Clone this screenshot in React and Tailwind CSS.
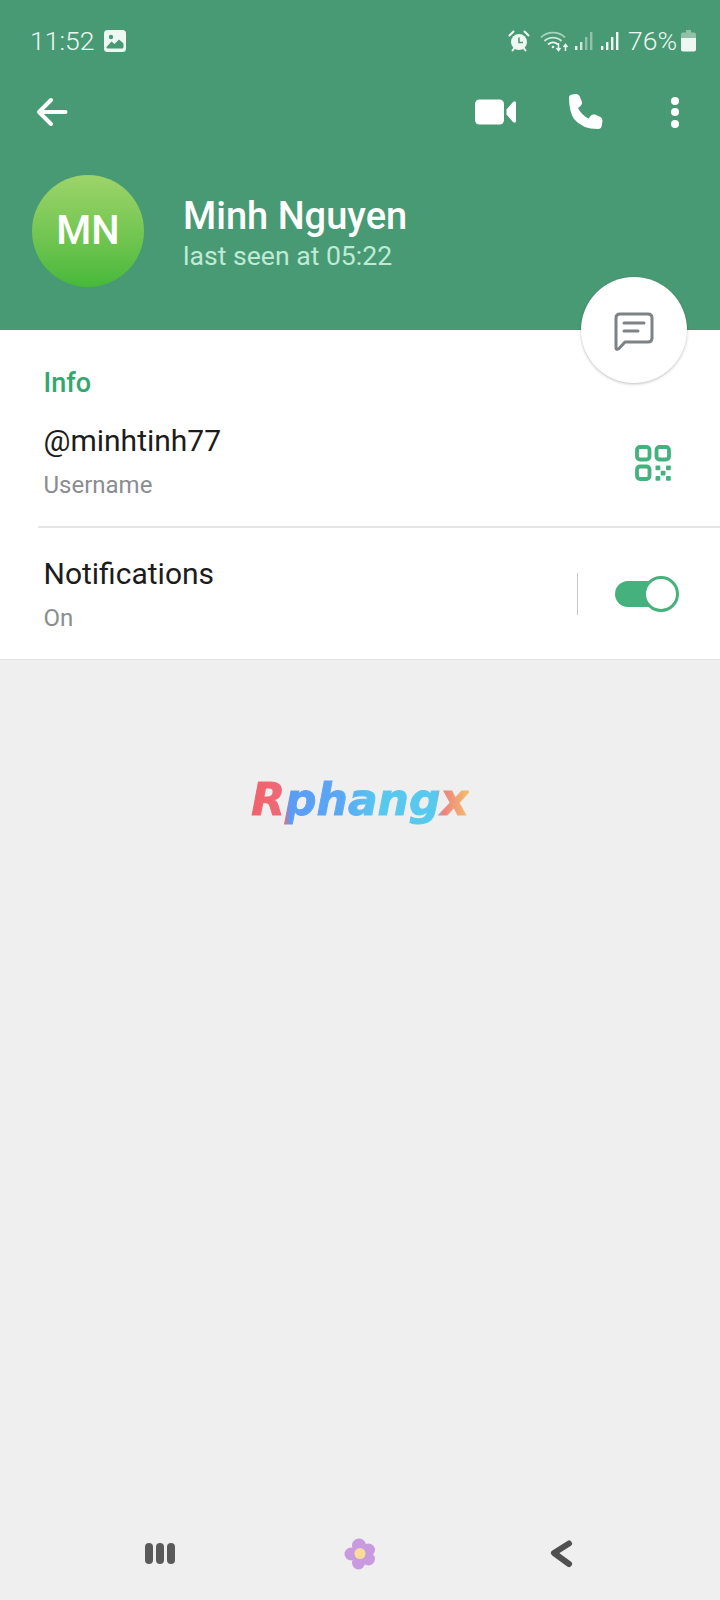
function ImageBadge() {
  return (
    <svg width="22" height="22" viewBox="0 0 22 22">
      <rect width="22" height="22" rx="3.5" fill="#eef7f2" />
      <circle cx="7" cy="7" r="2.2" fill="#489a74" />
      <path d="M2.5 17 L7.5 11.5 L10.5 14 L15 9.5 L19.5 13.5 V17 Q19.5 18.5 18 18.5 H4 Q2.5 18.5 2.5 17 Z" fill="#489a74" />
    </svg>
  )
}

function AlarmIcon() {
  return (
    <svg width="22" height="22" viewBox="0 0 22 22" fill="none">
      <circle cx="11" cy="12" r="8" fill="#eef7f2" />
      <path d="M11 7.5 V12.5 H15" stroke="#489a74" strokeWidth="1.6" />
      <path d="M1.5 5.5 L5.5 1.5 M20.5 5.5 L16.5 1.5 M4.5 20.5 L6 18.5 M17.5 20.5 L16 18.5" stroke="#eef7f2" strokeWidth="2" strokeLinecap="round" />
    </svg>
  )
}

function WifiIcon() {
  return (
    <svg width="30" height="22" viewBox="0 0 30 22" fill="none">
      <path d="M1 7.5 C7 1 19 1 25 7.5" stroke="#a9d3be" strokeWidth="1.8" />
      <path d="M4.5 11 C9 6.5 17 6.5 21.5 11" stroke="#cfe6da" strokeWidth="1.8" />
      <path d="M8 14.5 C11 12 15 12 18 14.5" stroke="#eef7f2" strokeWidth="1.8" />
      <circle cx="13" cy="17" r="1.3" fill="#eef7f2" />
      <path d="M18.5 13 V20 M16.5 18 L18.5 20.5 L20.5 18" stroke="#eef7f2" strokeWidth="1.5" />
      <path d="M25.5 21 V15 M23.5 17 L25.5 14.5 L27.5 17" stroke="#eef7f2" strokeWidth="1.5" />
    </svg>
  )
}

function SignalIcon({ faded }) {
  const last = faded ? '#8fc2a9' : '#eef7f2'
  return (
    <svg width="18" height="20" viewBox="0 0 18 20">
      <rect x="0" y="15" width="2.4" height="4" fill="#eef7f2" />
      <rect x="5" y="11" width="2.4" height="8" fill={faded ? '#cfe6da' : '#eef7f2'} />
      <rect x="10" y="6" width="2.4" height="13" fill={last} />
      <rect x="15" y="1" width="2.4" height="18" fill={last} />
    </svg>
  )
}

function BatteryIcon() {
  return (
    <svg width="15" height="22" viewBox="0 0 15 22">
      <path d="M5 0 H10 V2.5 H13 Q15 2.5 15 4.5 V8 H0 V4.5 Q0 2.5 2 2.5 H5 Z" fill="#8fc2a9" />
      <path d="M0 8 H15 V19.5 Q15 21.5 13 21.5 H2 Q0 21.5 0 19.5 Z" fill="#eef7f2" />
    </svg>
  )
}

function BackArrow() {
  return (
    <svg width="32" height="30" viewBox="0 0 32 30" fill="none" stroke="white" strokeWidth="4" strokeLinecap="round" strokeLinejoin="round">
      <path d="M29.5 15 H3 M15 3 L3 15 L15 27" />
    </svg>
  )
}

function VideoIcon() {
  return (
    <svg width="41" height="26" viewBox="0 0 41 26" fill="white">
      <rect width="29" height="25" y="0.5" rx="4.5" />
      <path d="M31.5 10.5 L38 3 Q41 1 41 4.5 V21.5 Q41 25 38 23 L31.5 15.5 Z" />
    </svg>
  )
}

function PhoneIcon() {
  return (
    <svg width="36" height="36" viewBox="0 0 36 36" fill="white">
      <path d="M2 3.5 Q2 1 5 0.5 L9 0 Q11.5 0 12.5 2 L15 8 Q15.5 10.5 13.5 12 L11 14 Q14.5 21 21.5 24.5 L24 21.5 Q25.5 20 28 20.5 L33.5 23 Q35.5 24 35.5 26.5 L35 30.5 Q34.5 35 31 35 Q15 35 7 25 Q2 17 2 3.5 Z" />
    </svg>
  )
}

function ChatIcon() {
  return (
    <svg width="40" height="40" viewBox="0 0 40 40" fill="none" stroke="#7d8285" strokeWidth="3" strokeLinecap="round" strokeLinejoin="round">
      <path d="M2 36 V6 Q2 2 6 2 H34 Q38 2 38 6 V26 Q38 30 34 30 H11 L5 36.5 Q2 38.5 2 36 Z" />
      <path d="M10 11 H30 M10 19 H24" />
    </svg>
  )
}

function QrIcon() {
  return (
    <svg width="36" height="36" viewBox="0 0 36 36" fill="none">
      <g stroke="#45b27e" strokeWidth="3.8">
        <rect x="2" y="2" width="12.5" height="12.5" rx="3" />
        <rect x="21.5" y="2" width="12.5" height="12.5" rx="3" />
        <rect x="2" y="21.5" width="12.5" height="12.5" rx="3" />
      </g>
      <g fill="#45b27e">
        <rect x="20.5" y="20.5" width="4.8" height="4.8" rx="1" />
        <rect x="31" y="20.5" width="4.8" height="4.8" rx="1" />
        <rect x="25.7" y="25.7" width="4.8" height="4.8" rx="1" />
        <rect x="20.5" y="31" width="4.8" height="4.8" rx="1" />
        <rect x="31" y="31" width="4.8" height="4.8" rx="1" />
      </g>
    </svg>
  )
}

function Flower() {
  return (
    <svg width="32" height="32" viewBox="0 0 32 32">
      <g fill="#c99ae0">
        <circle cx="15" cy="7.5" r="7" />
        <circle cx="24.5" cy="12" r="6.5" />
        <circle cx="24.5" cy="21" r="6.5" />
        <circle cx="14.5" cy="25" r="6.5" />
        <circle cx="7" cy="16" r="6.5" />
        <circle cx="16" cy="16" r="8" />
      </g>
      <circle cx="16" cy="15.5" r="5.5" fill="#f8dc98" />
    </svg>
  )
}

function RecentsIcon() {
  return (
    <div className="flex gap-[3px]">
      <div className="h-[21px] w-[8px] rounded-full bg-[#5a5a5a]" />
      <div className="h-[21px] w-[8px] rounded-full bg-[#5a5a5a]" />
      <div className="h-[21px] w-[8px] rounded-full bg-[#5a5a5a]" />
    </div>
  )
}

function NavBack() {
  return (
    <svg width="24" height="28" viewBox="0 0 24 28" fill="none" stroke="#505050" strokeWidth="6" strokeLinecap="round" strokeLinejoin="round">
      <path d="M20 3.5 L5 13 L20 24" />
    </svg>
  )
}

export default function App() {
  return (
    <div className="flex h-[1600px] w-[720px] flex-col overflow-hidden bg-[#efefef] font-['Roboto',sans-serif]">
      <div className="relative bg-[#489a74]">
        <div className="flex h-[82px] items-center pl-[30px] pr-[24px] text-[#eef7f2]">
          <span className="text-[26.5px] font-light">11:52</span>
          <span className="ml-[10px]"><ImageBadge /></span>
          <div className="ml-auto flex items-center">
            <AlarmIcon />
            <span className="ml-[10px]"><WifiIcon /></span>
            <span className="ml-[5px]"><SignalIcon faded /></span>
            <span className="ml-[8px]"><SignalIcon /></span>
            <span className="ml-[9px] text-[26.5px] font-light">76%</span>
            <span className="ml-[4px]"><BatteryIcon /></span>
          </div>
        </div>

        <div className="flex h-[60px] items-center pl-[36px] pr-[41px]">
          <BackArrow />
          <div className="ml-auto flex items-center">
            <VideoIcon />
            <span className="ml-[51px]"><PhoneIcon /></span>
            <div className="ml-[68px] flex flex-col gap-[3.5px]">
              <div className="h-[8px] w-[8px] rounded-full bg-white" />
              <div className="h-[8px] w-[8px] rounded-full bg-white" />
              <div className="h-[8px] w-[8px] rounded-full bg-white" />
            </div>
          </div>
        </div>

        <div className="flex items-center pb-[43px] pl-[32px] pt-[33px]">
          <div className="flex h-[112px] w-[112px] items-center justify-center rounded-full bg-gradient-to-b from-[#9dd46a] to-[#46b93a] text-[40px] font-medium text-white">
            MN
          </div>
          <div className="ml-[39px] mt-[1px]">
            <div className="text-[38px] font-medium leading-[48px] text-white">Minh Nguyen</div>
            <div className="text-[26.6px] leading-[32px] text-[#bfead5]">last seen at 05:22</div>
          </div>
        </div>

        <div className="absolute -bottom-[53px] right-[33px] flex h-[106px] w-[106px] items-center justify-center rounded-full bg-white pt-[3px] shadow-[0_1px_3px_rgba(0,0,0,0.25)]">
          <ChatIcon />
        </div>
      </div>

      <div className="border-b border-[#e4e4e4] bg-white">
        <div className="px-[43.5px] pt-[35px] text-[27px] font-medium leading-[36px] text-[#32a76e]">Info</div>

        <div className="flex items-center pb-[20px] pl-[43.5px] pr-[49px] pt-[19px]">
          <div>
            <div className="text-[30px] leading-[42px] text-[#1c1c1c]">@minhtinh77</div>
            <div className="mt-[2px] text-[24px] leading-[42px] text-[#8a8d8f]">Username</div>
          </div>
          <div className="ml-auto"><QrIcon /></div>
        </div>

        <div className="ml-[38px] h-[2px] bg-[#e6e6e6]" />

        <div className="flex items-center pb-[20px] pl-[43.5px] pr-[45px] pt-[25px]">
          <div>
            <div className="text-[30px] leading-[42px] text-[#1c1c1c]">Notifications</div>
            <div className="mt-[2px] text-[24px] leading-[42px] text-[#8a8d8f]">On</div>
          </div>
          <div className="-mt-[4px] ml-auto flex items-center">
            <div className="h-[42px] w-[1px] bg-[#c9c9c9]" />
            <div className="relative ml-[37px] h-[26px] w-[60px] rounded-full bg-[#45b27e]">
              <div className="absolute -right-[4px] -top-[5px] h-[36px] w-[36px] rounded-full border-[3.5px] border-[#45b27e] bg-white" />
            </div>
          </div>
        </div>
      </div>

      <div className="flex justify-center pt-[112px]">
        <div className="bg-[linear-gradient(90deg,#f0626a_0%,#ee6a78_15%,#5a9cf5_18%,#5aa8f5_42%,#57c8ee_58%,#57c8ee_85%,#ee8080_88%,#f3c06a_100%)] bg-clip-text font-['DejaVu_Sans',sans-serif] text-[44px] font-bold italic leading-[56px] text-transparent [-webkit-text-stroke:1px_transparent]">
          Rphangx
        </div>
      </div>

      <div className="mt-auto flex h-[96px] items-start pt-[34px]">
        <div className="ml-[145px] mt-[5px]"><RecentsIcon /></div>
        <div className="ml-[169px]"><Flower /></div>
        <div className="ml-[173px] mt-[2px]"><NavBack /></div>
      </div>
    </div>
  )
}
